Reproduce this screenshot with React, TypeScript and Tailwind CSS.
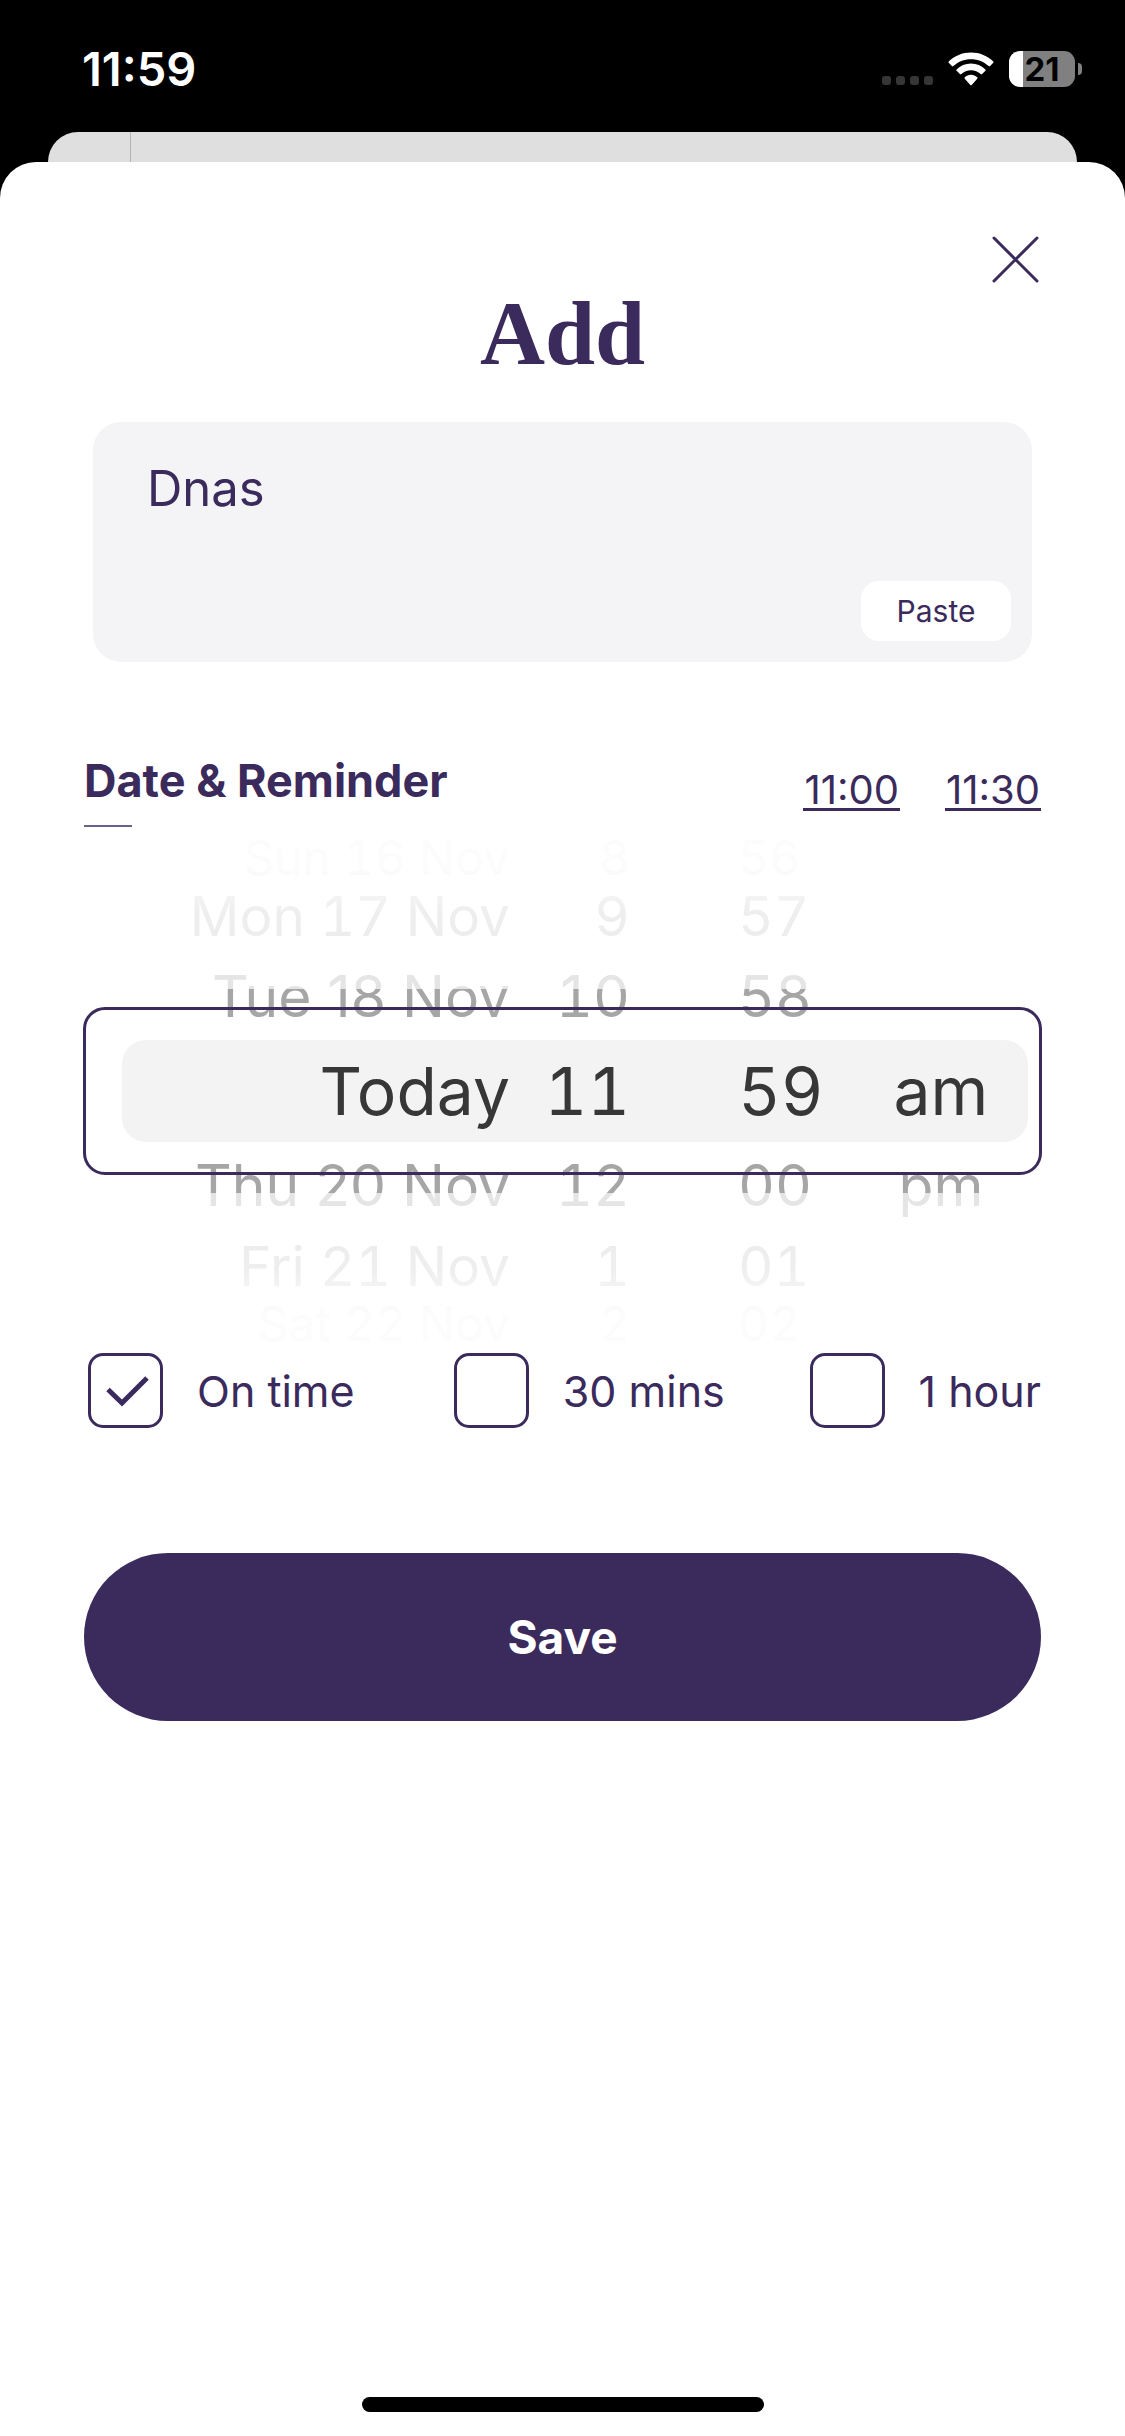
import { useState } from "react";

type WheelProps = {
  label: string;
  values: string[];
  className: string;
};

const ROW_STYLES = [
  "h-[42px] text-[48px] text-[#c4c4c4] tabular-nums",
  "h-[74px] text-[55px] text-[#bcbcbc] tabular-nums",
  "h-[87px] text-[57px] text-[#a6a6a6]",
  "h-[102px] text-[66px] text-[#373737]",
  "h-[87px] text-[57px] text-[#a6a6a6]",
  "h-[74px] text-[55px] text-[#bcbcbc] tabular-nums",
  "h-[42px] text-[48px] text-[#c4c4c4] tabular-nums",
];

function Wheel({ label, values, className }: WheelProps) {
  return (
    <div role="group" aria-label={label} className={`flex flex-col ${className}`}>
      {values.map((value, i) => (
        <button
          key={i}
          type="button"
          disabled={!value}
          aria-pressed={i === 3}
          className={`flex items-center whitespace-nowrap leading-none ${ROW_STYLES[i]}`}
        >
          {value}
        </button>
      ))}
    </div>
  );
}

function StatusBar() {
  return (
    <header className="flex h-[132px] items-start justify-between pt-[42px] pr-[43px] pl-[82px] text-white">
      <span className="text-[47px] leading-[54px] font-semibold">11:59</span>
      <div className="flex h-[54px] items-center">
        <div className="mt-[23px] mr-[15px] flex gap-[5px]" aria-label="No signal">
          <span className="size-[9px] rounded-[3px] bg-[#363636]" />
          <span className="size-[9px] rounded-[3px] bg-[#363636]" />
          <span className="size-[9px] rounded-[3px] bg-[#363636]" />
          <span className="size-[9px] rounded-[3px] bg-[#363636]" />
        </div>
        <svg width="46" height="34" viewBox="0 0 46 34" fill="currentColor" className="mr-[15px]" aria-label="Wi-Fi">
          <path d="M23 0.5C14.3 0.5 6.4 3.9 0.7 9.4a1 1 0 0 0 0 1.4l3.2 3.3a1 1 0 0 0 1.4 0C9.900 9.900 16.100 7.200 23 7.200s13.100 2.700 17.700 6.900a1 1 0 0 0 1.400 0l3.200-3.300a1 1 0 0 0 0-1.400C39.600 3.900 31.700 0.500 23 0.500z" />
          <path d="M23 11.600c-5.600 0-10.700 2.200-14.400 5.800a1 1 0 0 0 0 1.400l3.300 3.300a1 1 0 0 0 1.400 0c2.600-2.400 6-3.800 9.700-3.800s7.100 1.400 9.700 3.800a1 1 0 0 0 1.400 0l3.300-3.300a1 1 0 0 0 0-1.400C33.700 13.800 28.600 11.600 23 11.600z" />
          <path d="M23 22.800c-2.400 0-4.600 0.900-6.200 2.400a1 1 0 0 0 0 1.500l5.500 6.200a1 1 0 0 0 1.400 0l5.500-6.200a1 1 0 0 0 0-1.500C27.600 23.700 25.400 22.800 23 22.800z" />
        </svg>
        <div className="flex h-9 w-[66px] items-center justify-center rounded-[11px] bg-linear-to-r from-white from-[14px] to-[#808080] to-[14px] text-[33px] leading-none font-bold text-black">
          21
        </div>
        <span className="ml-[3px] h-3 w-1 rounded-r-full bg-[#808080]" />
      </div>
    </header>
  );
}

const REMINDERS = ["On time", "30 mins", "1 hour"];

export default function App() {
  const [note, setNote] = useState("Dnas");
  const [selected, setSelected] = useState<string[]>(["On time"]);

  const toggle = (name: string) =>
    setSelected((s) => (s.includes(name) ? s.filter((n) => n !== name) : [...s, name]));

  return (
    <div className="flex min-h-screen flex-col bg-black font-['Inter',sans-serif] text-[#3b2a5c]">
      <StatusBar />

      <div className="mx-12 flex h-[30px] rounded-t-[32px] bg-[#dfdfdf] pl-[82px]">
        <span className="w-px bg-[#b4b4b4]" />
      </div>

      <main className="flex flex-1 flex-col rounded-t-[36px] bg-white px-[84px] pt-[72px] pb-[24px]">
        <button type="button" aria-label="Close" className="self-end">
          <svg width="51" height="51" viewBox="0 0 51 51" stroke="currentColor" strokeWidth="3" strokeLinecap="round">
            <path d="M4 4 47 47M47 4 4 47" />
          </svg>
        </button>

        <h1 className="text-center font-['Liberation_Serif',serif] text-[90px] leading-[98px] font-bold">Add</h1>

        <div className="mx-[9px] mt-[39px] flex h-[240px] flex-col rounded-[28px] bg-[#f4f4f7] pt-[37px] pr-[21px] pb-[21px] pl-[54px]">
          <textarea
            aria-label="Note"
            value={note}
            onChange={(e) => setNote(e.target.value)}
            className="min-h-0 flex-1 resize-none overflow-hidden bg-transparent text-[49px] leading-[60px] outline-none"
          />
          <button type="button" className="h-[60px] w-[150px] self-end rounded-[18px] bg-white text-[30px] leading-none">
            Paste
          </button>
        </div>

        <div className="mt-[92px] flex h-[75px] items-start justify-between">
          <div>
            <h2 className="text-[45px] leading-[54px] font-bold">Date &amp; Reminder</h2>
            <div className="mt-[17px] h-[2px] w-12 bg-[#68628a]" />
          </div>
          <div className="flex gap-[45px] pt-[18px]">
            <button type="button" className="border-b-3 border-[#3b2a5c] px-px text-[40px] leading-[36px]">11:00</button>
            <button type="button" className="border-b-3 border-[#3b2a5c] px-px text-[40px] leading-[36px]">11:30</button>
          </div>
        </div>

        <section aria-label="Date and time" className="relative mt-[8px]">
          <div className="absolute top-[203px] right-[13px] left-[38px] h-[102px] rounded-[24px] bg-[#f3f3f3]" />
          <div className="relative flex">
            <Wheel
              label="Day"
              className="w-[426px] items-end"
              values={["Sun 16 Nov", "Mon 17 Nov", "Tue 18 Nov", "Today", "Thu 20 Nov", "Fri 21 Nov", "Sat 22 Nov"]}
            />
            <Wheel
              label="Hour"
              className="w-[120px] items-end tabular-nums"
              values={["8", "9", "10", "11", "12", "1", "2"]}
            />
            <Wheel
              label="Minute"
              className="ml-[108px] w-[120px] items-start tabular-nums"
              values={["56", "57", "58", "59", "00", "01", "02"]}
            />
            <Wheel label="Period" className="w-[166px] items-center" values={["", "", "", "am", "pm", "", ""]} />
          </div>
          <div className="pointer-events-none absolute inset-x-0 top-0 h-[152px] bg-linear-to-b from-white/95 from-20% via-white/75 via-50% to-white/70" />
          <div className="pointer-events-none absolute inset-x-0 bottom-0 h-[152px] bg-linear-to-t from-white/95 from-20% via-white/75 via-50% to-white/70" />
          <div className="pointer-events-none absolute -inset-x-px top-[170px] h-[168px] rounded-[22px] border-3 border-[#3b2a5c]" />
        </section>

        <div className="mt-2 grid grid-cols-[367fr_357fr_auto] pl-[4px]">
          {REMINDERS.map((name) => (
            <label key={name} className="flex items-center gap-[34px] text-[43px] leading-[54px] whitespace-nowrap">
              <span className="grid">
                <input
                  type="checkbox"
                  checked={selected.includes(name)}
                  onChange={() => toggle(name)}
                  className="peer col-start-1 row-start-1 size-[75px] appearance-none rounded-[15px] border-3 border-[#3b2a5c]"
                />
                <svg
                  width="75"
                  height="75"
                  viewBox="0 0 75 75"
                  fill="none"
                  stroke="currentColor"
                  strokeWidth="5"
                  className="pointer-events-none invisible col-start-1 row-start-1 peer-checked:visible"
                >
                  <path d="M20 36.500 34 50 59 25" />
                </svg>
              </span>
              {name}
            </label>
          ))}
        </div>

        <button type="button" className="mt-[125px] h-[168px] rounded-full bg-[#3b2a5c] text-[46px] font-bold text-white">
          Save
        </button>

        <div className="mt-auto h-[15px] w-[402px] self-center rounded-full bg-black" />
      </main>
    </div>
  );
}
